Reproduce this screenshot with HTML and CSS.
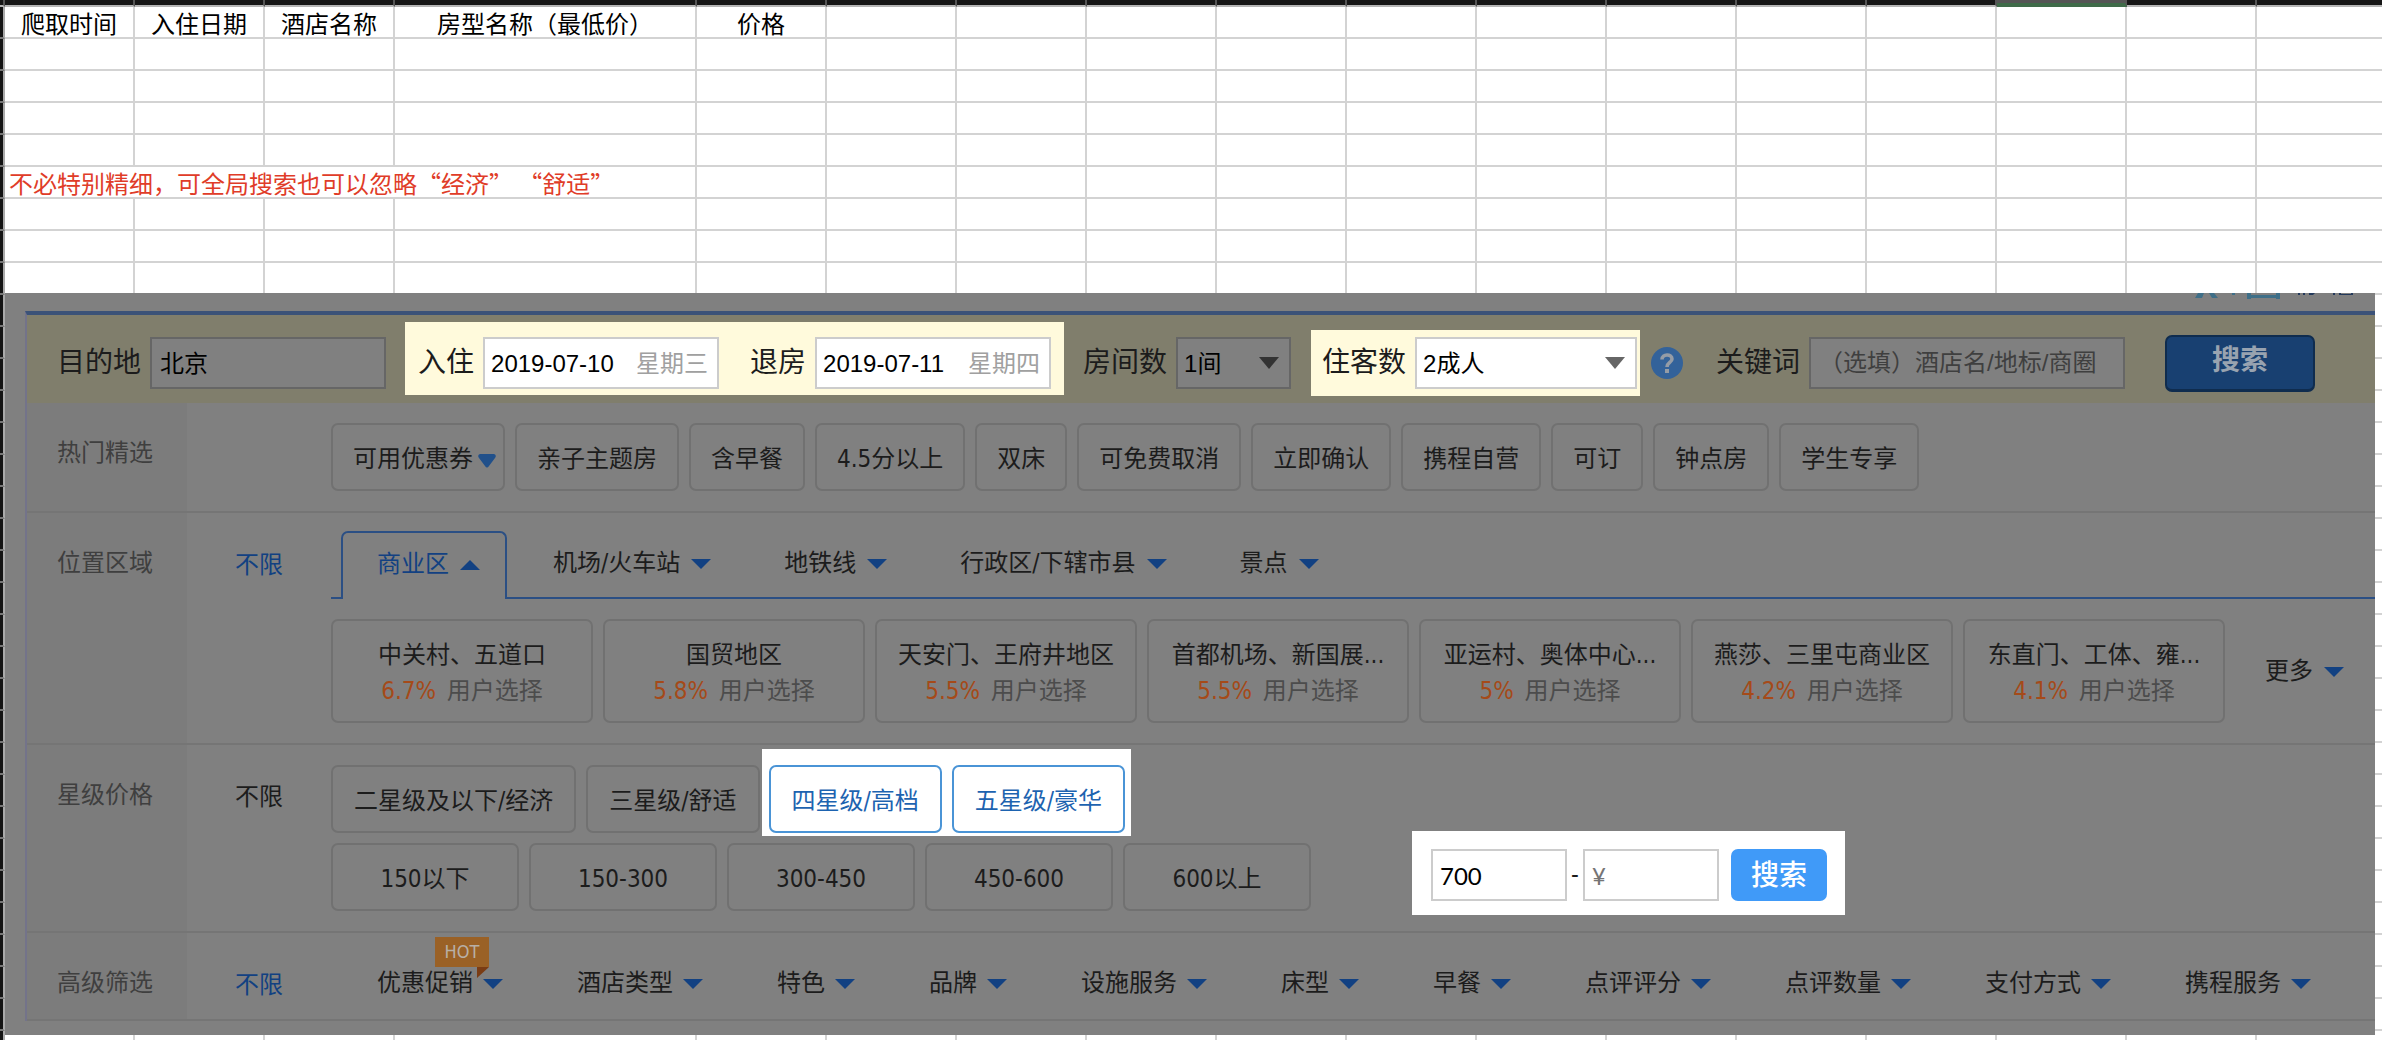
FILE: index.html
```html
<!DOCTYPE html>
<html lang="zh-CN">
<head>
<meta charset="utf-8">
<title>酒店价格</title>
<link rel="stylesheet" href="styles.css">
</head>
<body>
<main class="workspace">
  <table class="sheet">
    <colgroup>
      <col class="col-index"><col class="col"><col class="col"><col class="col"><col class="col-wide"><col class="col">
      <col class="col" span="12">
    </colgroup>
    <thead>
      <tr class="letters"><td></td><td></td><td></td><td></td><td></td><td></td><td></td><td></td><td></td><td></td><td></td><td></td><td></td><td></td><td></td><td class="current"></td><td></td><td></td></tr>
    </thead>
    <tbody id="rows">
      <tr><td class="index"></td><th scope="col">爬取时间</th><th scope="col">入住日期</th><th scope="col">酒店名称</th><th scope="col">房型名称（最低价）</th><th scope="col">价格</th><td></td><td></td><td></td><td></td><td></td><td></td><td></td><td></td><td></td><td></td><td></td><td></td></tr>
      <tr class="blank"><td class="index"></td><td></td><td></td><td></td><td></td><td></td><td></td><td></td><td></td><td></td><td></td><td></td><td></td><td></td><td></td><td></td><td></td><td></td></tr>
      <tr class="blank"><td class="index"></td><td></td><td></td><td></td><td></td><td></td><td></td><td></td><td></td><td></td><td></td><td></td><td></td><td></td><td></td><td></td><td></td><td></td></tr>
      <tr class="blank"><td class="index"></td><td></td><td></td><td></td><td></td><td></td><td></td><td></td><td></td><td></td><td></td><td></td><td></td><td></td><td></td><td></td><td></td><td></td></tr>
      <tr class="blank"><td class="index"></td><td></td><td></td><td></td><td></td><td></td><td></td><td></td><td></td><td></td><td></td><td></td><td></td><td></td><td></td><td></td><td></td><td></td></tr>
      <tr><td class="index"></td><td class="remark" colspan="4">不必特别精细，可全局搜索也可以忽略“经济”&nbsp;“舒适”</td><td></td><td></td><td></td><td></td><td></td><td></td><td></td><td></td><td></td><td></td><td></td><td></td><td></td></tr>
    </tbody>
  </table>

  <section class="floating">
    <svg class="remnant" width="162" height="6" viewBox="0 0 162 6" aria-hidden="true">
      <path fill="#3f6f88" d="M3 0h6l-2 5H0zM14 0h5l4 5h-6zM37 0h3v2h-3zM52 0h4v2h25V0h4v6h-4V5H56v1h-4z"/>
      <path fill="#243a5c" d="M103 0h2v2h-2zM108 0h2v2h-2zM114 0h6l-2 2h-4zM138 0h2v2h-2zM144 0h2v1h10V0h2v2h-14z"/>
    </svg>
    <form class="search" onsubmit="return false">
      <div class="bar">
        <div class="field">
          <label for="city">目的地</label>
          <input class="box dim" id="city" type="text" value="北京">
        </div>
        <div class="spot dates">
          <label for="checkin">入住</label>
          <div class="box date"><input id="checkin" type="text" value="2019-07-10"><span>星期三</span></div>
          <label class="second" for="checkout">退房</label>
          <div class="box date"><input id="checkout" type="text" value="2019-07-11"><span>星期四</span></div>
        </div>
        <div class="field">
          <label for="rooms">房间数</label>
          <div class="pick">
            <select class="box dim rooms" id="rooms"><option>1间</option></select>
            <svg class="caret" width="20" height="12" viewBox="0 0 20 12" aria-hidden="true"><path fill="#333" d="M0 0h20L10 12z"/></svg>
          </div>
        </div>
        <div class="spot guests">
          <label for="guests">住客数</label>
          <div class="pick">
            <select class="box people" id="guests"><option>2成人</option></select>
            <svg class="caret" width="20" height="12" viewBox="0 0 20 12" aria-hidden="true"><path fill="#666" d="M0 0h20L10 12z"/></svg>
          </div>
        </div>
        <a class="help" href="#" aria-label="帮助">
          <svg width="32" height="32" viewBox="0 0 32 32" aria-hidden="true"><circle cx="16" cy="16" r="16" fill="#33629a"/><path d="M11 12.500c0-6 10-6 10-.5 0 3.500-5 3.500-5 8" fill="none" stroke="#959ca6" stroke-width="3.600"/><rect x="14" y="22" width="4" height="4" fill="#959ca6"/></svg>
        </a>
        <div class="field">
          <label for="keyword">关键词</label>
          <input class="box dim keyword" id="keyword" type="text" placeholder="（选填）酒店名/地标/商圈">
        </div>
        <button class="go" type="submit">搜索</button>
      </div>

      <div class="row">
        <h2 class="name">热门精选</h2>
        <div class="any"></div>
        <div class="chips">
          <button class="chip coupon" type="button">可用优惠券<svg width="18" height="14" viewBox="0 0 18 14" aria-hidden="true"><path fill="#21508a" d="M2 0h14q3 1 1 4l-6 8q-2 3-4 0L1 4Q-1 1 2 0z"/></svg></button>
          <button class="chip" type="button">亲子主题房</button>
          <button class="chip" type="button">含早餐</button>
          <button class="chip" type="button">4.5分以上</button>
          <button class="chip" type="button">双床</button>
          <button class="chip" type="button">可免费取消</button>
          <button class="chip" type="button">立即确认</button>
          <button class="chip" type="button">携程自营</button>
          <button class="chip" type="button">可订</button>
          <button class="chip" type="button">钟点房</button>
          <button class="chip" type="button">学生专享</button>
        </div>
      </div>

      <div class="row">
        <h2 class="name">位置区域</h2>
        <a class="any on" href="#">不限</a>
        <div class="area">
          <div class="tabs">
            <button class="tab active" type="button">商业区<i class="tri up"></i></button>
            <button class="tab" type="button">机场/火车站<i class="tri"></i></button>
            <button class="tab" type="button">地铁线<i class="tri"></i></button>
            <button class="tab" type="button">行政区/下辖市县<i class="tri"></i></button>
            <button class="tab" type="button">景点<i class="tri"></i></button>
          </div>
          <div class="zones">
            <button class="zone" type="button">中关村、五道口<span><b>6.7%</b> 用户选择</span></button>
            <button class="zone" type="button">国贸地区<span><b>5.8%</b> 用户选择</span></button>
            <button class="zone" type="button">天安门、王府井地区<span><b>5.5%</b> 用户选择</span></button>
            <button class="zone" type="button">首都机场、新国展...<span><b>5.5%</b> 用户选择</span></button>
            <button class="zone" type="button">亚运村、奥体中心...<span><b>5%</b> 用户选择</span></button>
            <button class="zone" type="button">燕莎、三里屯商业区<span><b>4.2%</b> 用户选择</span></button>
            <button class="zone" type="button">东直门、工体、雍...<span><b>4.1%</b> 用户选择</span></button>
            <button class="more" type="button">更多<i class="tri"></i></button>
          </div>
        </div>
      </div>

      <div class="row">
        <h2 class="name">星级价格</h2>
        <a class="any" href="#">不限</a>
        <div class="levels">
          <div class="chips stars">
            <button class="chip" type="button">二星级及以下/经济</button>
            <button class="chip" type="button">三星级/舒适</button>
            <div class="spot picked">
              <button class="chip" type="button">四星级/高档</button>
              <button class="chip" type="button">五星级/豪华</button>
            </div>
          </div>
          <div class="chips prices">
            <button class="chip" type="button">150以下</button>
            <button class="chip" type="button">150-300</button>
            <button class="chip" type="button">300-450</button>
            <button class="chip" type="button">450-600</button>
            <button class="chip" type="button">600以上</button>
            <div class="spot range">
              <input class="box" type="text" value="700" aria-label="最低价">
              <span>-</span>
              <input class="box" type="text" placeholder="¥" aria-label="最高价">
              <button class="apply" type="button">搜索</button>
            </div>
          </div>
        </div>
      </div>

      <div class="row">
        <h2 class="name">高级筛选</h2>
        <a class="any on" href="#">不限</a>
        <div class="filters">
          <button class="filter" type="button">优惠促销<i class="tri"></i><span class="hot">HOT<svg width="12" height="11" viewBox="0 0 12 11" aria-hidden="true"><path fill="#7a3c14" d="M0 0h12L0 11z"/></svg></span></button>
          <button class="filter" type="button">酒店类型<i class="tri"></i></button>
          <button class="filter" type="button">特色<i class="tri"></i></button>
          <button class="filter" type="button">品牌<i class="tri"></i></button>
          <button class="filter" type="button">设施服务<i class="tri"></i></button>
          <button class="filter" type="button">床型<i class="tri"></i></button>
          <button class="filter" type="button">早餐<i class="tri"></i></button>
          <button class="filter" type="button">点评评分<i class="tri"></i></button>
          <button class="filter" type="button">点评数量<i class="tri"></i></button>
          <button class="filter" type="button">支付方式<i class="tri"></i></button>
          <button class="filter" type="button">携程服务<i class="tri"></i></button>
        </div>
      </div>
    </form>
  </section>
</main>
<script src="sheet.js"></script>
</body>
</html>
```
FILE: sheet.js
```js
// Extend the sheet with blank rows down to the bottom of the window.
const rows = document.getElementById('rows');
const blank = rows.querySelector('.blank');
const needed = Math.ceil(window.innerHeight / 32) + 1;
while (rows.rows.length < needed) {
  rows.appendChild(blank.cloneNode(true));
}
```
FILE: styles.css
```css
* {
  box-sizing: border-box;
}

body {
  margin: 0;
  background: #fff;
  color: #000;
  font: 24px/29px "Noto Sans CJK SC", sans-serif;
}

button,
input,
select {
  margin: 0;
  font: inherit;
  color: inherit;
}

button {
  border: 0;
  background: none;
  white-space: nowrap;
}

a {
  color: inherit;
  text-decoration: none;
}

/* Spreadsheet */

.workspace {
  position: relative;
  height: 100vh;
  overflow: hidden;
}

.sheet {
  width: 2387px;
  table-layout: fixed;
  border-collapse: separate;
  border-spacing: 0;
}

.col-index { width: 5px; }
.col { width: 130px; }
.col-wide { width: 302px; }

.sheet td,
.sheet th {
  height: 32px;
  padding: 1px 0 0;
  border: solid #d3d3d3;
  border-width: 0 2px 2px 0;
  font-weight: 400;
  text-align: center;
  white-space: nowrap;
}

.sheet .index {
  border-right-color: #aaa;
  border-bottom-color: #777;
  background: #141414;
}

.sheet .letters td {
  height: 7px;
  border-right-color: #555;
  border-bottom-color: #b5b5b5;
  background: #161616;
}

.sheet .letters .current {
  border-bottom: 4px solid #3f6b49;
  background: #555;
}

.sheet .remark {
  padding-left: 4px;
  color: #e03c28;
  text-align: left;
}

/* Search window lying over the sheet */

.floating {
  position: absolute;
  top: 293px;
  right: 7px;
  left: 5px;
  padding: 18px 0 14px 20px;
  background: #808080;
  color: #1c1c1c;
  font-family: "DejaVu Sans Condensed", "Noto Sans CJK SC", sans-serif;
}

.remnant {
  position: absolute;
  top: 0;
  right: 18px;
}

.search {
  border-top: 4px solid #3b5278;
  border-left: 2px solid #73738a;
}

.bar {
  display: flex;
  align-items: flex-start;
  height: 88px;
  padding-left: 30px;
  background: #807e6c;
  white-space: nowrap;
}

.bar label {
  font-size: 28px;
  line-height: 52px;
}

.field,
.spot {
  display: flex;
  gap: 9px;
}

.field {
  margin-top: 22px;
}

.spot {
  background: #fff;
}

.box {
  width: 236px;
  height: 52px;
  padding: 0 8px;
  border: 2px solid #ccc;
  border-radius: 0;
  outline: 0;
  background: #fff;
  color: #000;
  font-family: "Liberation Sans", "Noto Sans CJK SC", sans-serif;
}

.box.dim {
  border-color: #666;
  background: #808080;
}

input.box {
  padding-bottom: 3px;
}

.dates {
  margin: 7px 19px 0;
  padding: 15px 13px 6px;
  background: #fffadc;
}

.dates .second {
  margin-left: 22px;
}

.date {
  display: flex;
  align-items: center;
  justify-content: space-between;
  padding: 0 9px 0 6px;
}

.date input {
  width: 130px;
  padding: 0;
  border: 0;
  outline: 0;
}

.date span {
  color: #a0a0a0;
}

.pick {
  display: grid;
  align-items: center;
}

.pick > * {
  grid-area: 1 / 1;
}

.pick .caret {
  justify-self: end;
  margin-right: 12px;
  pointer-events: none;
}

select.box {
  padding: 0 6px;
  appearance: none;
}

.rooms { width: 115px; }
.people { width: 222px; }

.guests {
  margin: 15px 11px 0 20px;
  padding: 7px 3px 7px 11px;
  background: #fffadc;
}

.help {
  height: 32px;
  margin: 32px 33px 0 0;
}

.help svg {
  display: block;
}

.box.keyword {
  width: 316px;
  padding-bottom: 0;
}

.keyword::placeholder {
  color: #3f3f3f;
}

.go {
  width: 150px;
  height: 57px;
  margin: 20px 0 0 40px;
  padding: 0 0 6px;
  border: 2px solid #0f2c4e;
  border-bottom-width: 3px;
  border-radius: 7px;
  background: #184071;
  color: #98a3b0;
  font-size: 28px;
  font-weight: 700;
}

/* Filter rows */

.row {
  display: flex;
  border-bottom: 2px solid #757575;
}

.name {
  flex: none;
  width: 160px;
  margin: 0;
  padding: 35px 0 0 30px;
  background: #7c7c7c;
  color: #3f3f3f;
  font-size: 24px;
  font-weight: 400;
  line-height: 30px;
}

.any {
  flex: none;
  width: 144px;
  padding: 38px 0 0 48px;
}

.on {
  color: #124182;
}

.chips {
  display: flex;
  gap: 10px;
  padding: 20px 0;
}

.chip {
  height: 68px;
  padding: 4px 20px 0;
  border: 2px solid #717171;
  border-radius: 7px;
}

.coupon {
  display: flex;
  align-items: center;
  gap: 5px;
  padding-right: 7px;
}

.coupon svg {
  margin-top: 4px;
}

.area {
  flex: 1;
  min-width: 0;
}

.tabs {
  display: flex;
  gap: 10px;
  margin-top: 18px;
  padding-left: 10px;
  box-shadow: inset 0 -2px #2b4f84;
}

.tab {
  display: flex;
  align-items: center;
  gap: 11px;
  height: 68px;
  padding: 0 27px 4px 36px;
}

.active {
  padding-right: 25px;
  padding-left: 34px;
  border: 2px solid #2b4f84;
  border-bottom: 0;
  border-radius: 7px 7px 0 0;
  background: #808080;
  color: #124182;
}

.tri {
  width: 0;
  height: 0;
  margin-top: 2px;
  border: solid transparent;
  border-width: 10px 10px 0;
  border-top-color: #124182;
}

.tri.up {
  border-width: 0 10px 10px;
  border-bottom-color: #124182;
}

.zones {
  display: flex;
  gap: 10px;
  padding: 20px 0;
}

.zone {
  flex: none;
  width: 262px;
  height: 104px;
  padding: 4px 0 0;
  border: 2px solid #717171;
  border-radius: 7px;
  line-height: 36px;
}

.zone span {
  display: block;
  color: #4c4c4c;
}

.zone b {
  margin-right: 4px;
  color: #a54a19;
  font-weight: 400;
}

.more {
  display: flex;
  align-items: center;
  gap: 11px;
  padding: 0 0 0 30px;
}

.levels {
  flex: 1;
}

.stars {
  padding-bottom: 10px;
}

.stars .chip {
  padding: 4px 21px 0;
}

.prices {
  padding-top: 0;
}

.prices .chip {
  width: 188px;
}

/* The highlight boxes reach past their row without stretching it. */
.picked {
  gap: 10px;
  margin: -16px 0 -3px -8px;
  padding: 16px 6px 3px 7px;
}

.picked .chip {
  border-color: #4a94d6;
  color: #1d63b0;
}

.range {
  gap: 12px;
  align-items: center;
  margin: -12px 0 -4px 91px;
  padding: 12px 18px 8px 19px;
}

.range .box {
  width: 136px;
  padding: 0 7px;
  font-family: Lato, "Noto Sans CJK SC", sans-serif;
}

.range span {
  width: 16px;
  margin: 0 -12px;
  text-align: center;
}

.apply {
  width: 96px;
  height: 52px;
  padding: 0;
  border-radius: 7px;
  background: #409af8;
  color: #fff;
  font-size: 28px;
  font-weight: 500;
}

.filters {
  display: flex;
  gap: 74px;
  padding: 31px 0 17px 46px;
}

.filter {
  position: relative;
  display: flex;
  align-items: center;
  gap: 10px;
  height: 38px;
  padding: 0;
}

.hot {
  position: absolute;
  top: -27px;
  left: 58px;
  width: 54px;
  height: 30px;
  background: #9a6126;
  color: #b8b0a6;
  font-size: 18px;
  line-height: 30px;
}

.hot svg {
  position: absolute;
  top: 30px;
  right: 0;
}
```
